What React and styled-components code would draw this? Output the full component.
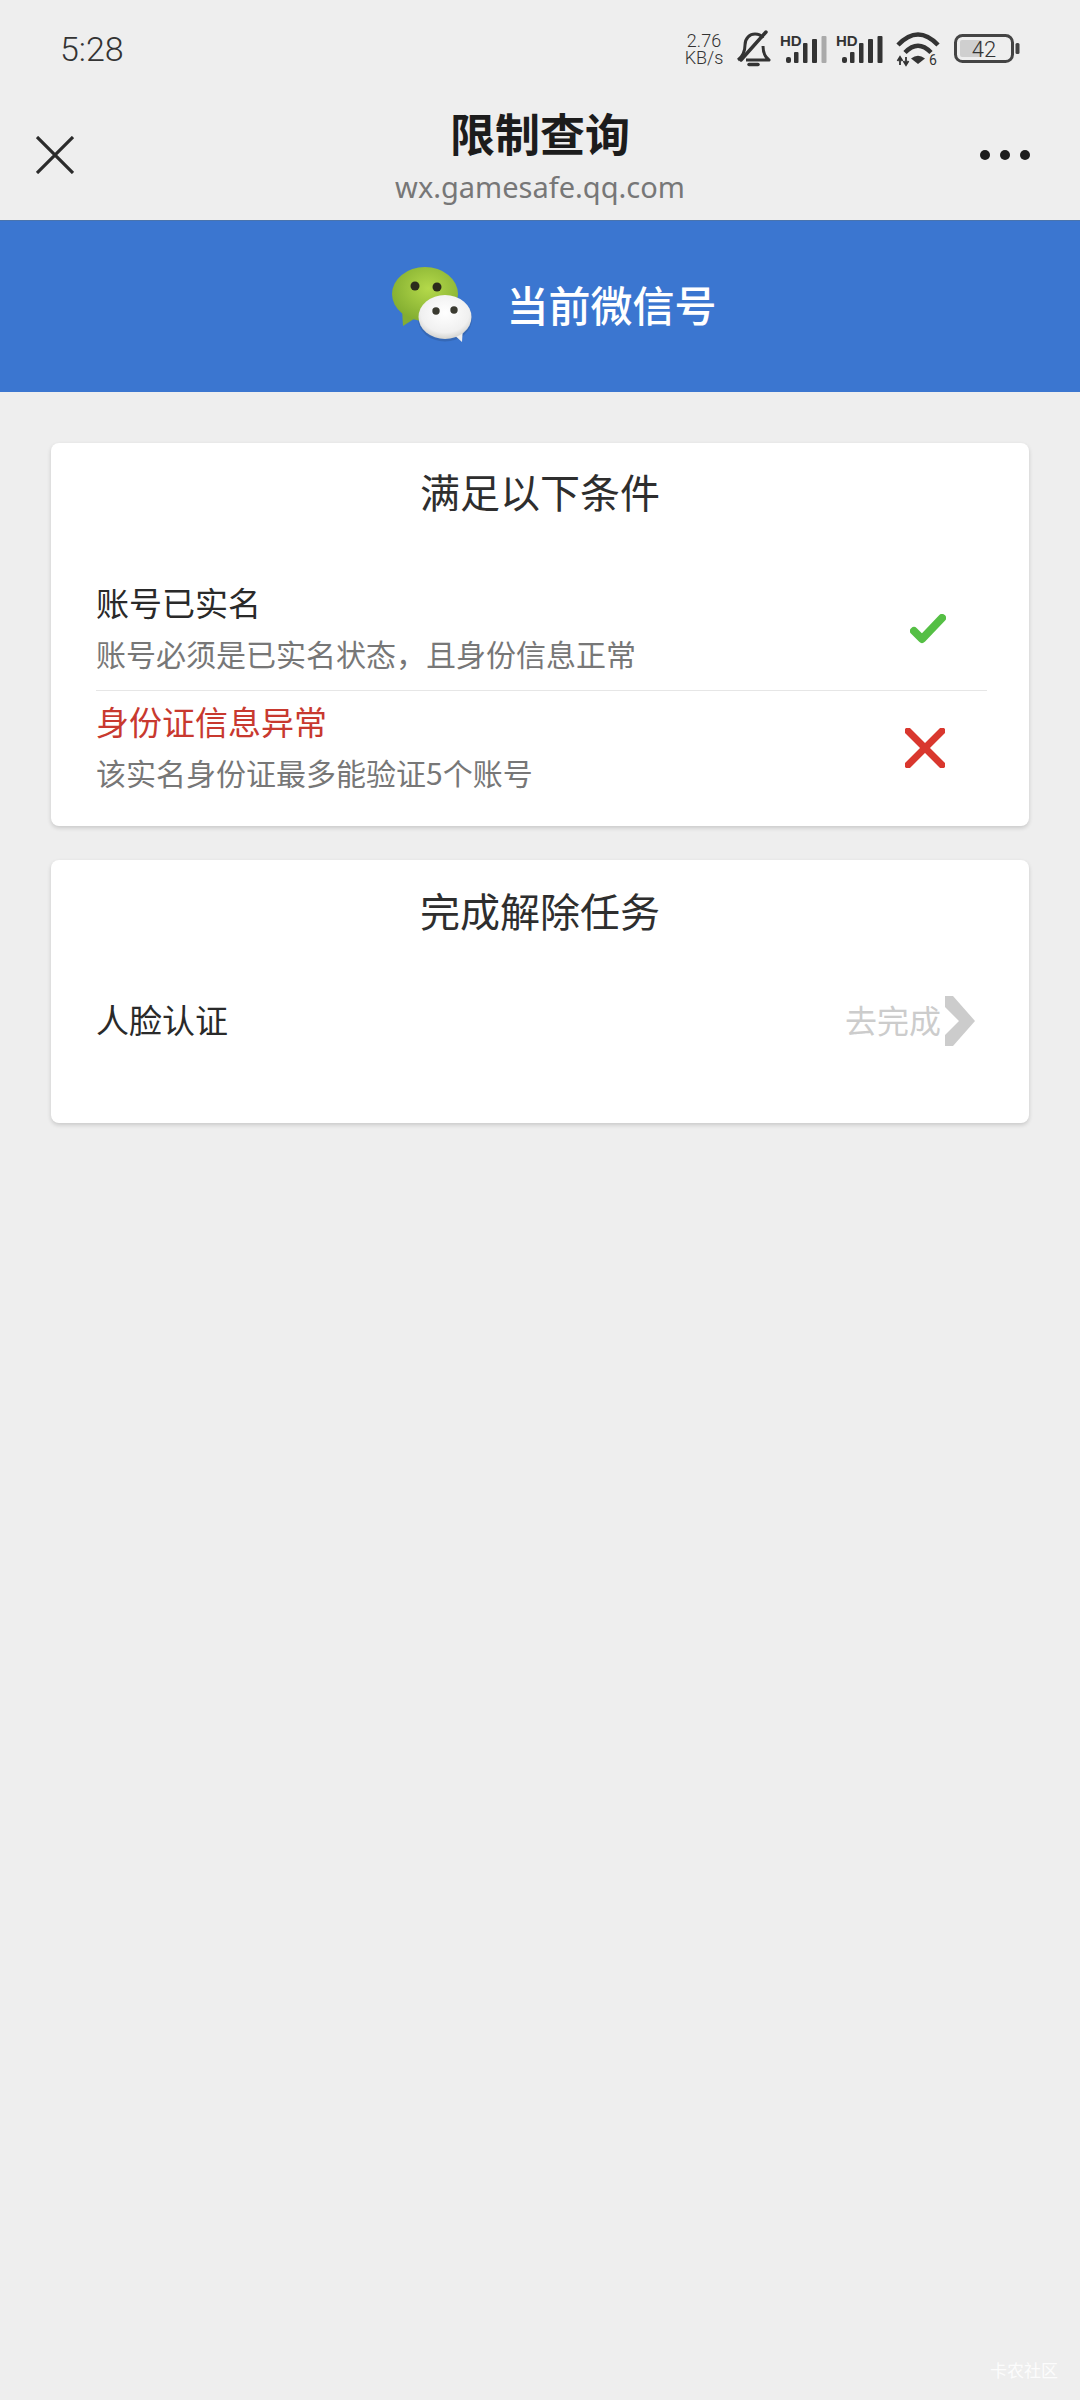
import React from "react";
import styled, { createGlobalStyle } from "styled-components";

const GlobalStyle = createGlobalStyle`
  html, body {
    margin: 0;
    padding: 0;
    background: #eeeeee;
    font-family: "Noto Sans CJK SC", "Noto Sans", sans-serif;
  }
  * {
    box-sizing: border-box;
  }
`;

const Page = styled.div`
  position: relative;
  width: 1080px;
  height: 2400px;
  overflow: hidden;
  background: #eeeeee;
`;

const StatusBar = styled.div`
  display: flex;
  justify-content: space-between;
  align-items: center;
  height: 98px;
  padding: 0 60px;
`;

const Clock = styled.div`
  font-family: Roboto, sans-serif;
  font-size: 34px;
  font-weight: 300;
  color: #333;
`;

const StatusIcons = styled.div`
  display: flex;
  align-items: center;
`;

const Speed = styled.div`
  display: flex;
  flex-direction: column;
  align-items: center;
  width: 42px;
  margin-right: 11px;
  font-family: Roboto, sans-serif;
  font-size: 18px;
  font-weight: 300;
  line-height: 17px;
  color: #333;
`;

const StatusIcon = styled.svg`
  display: block;
  overflow: visible;
  margin-right: ${(props) => props.$gap || 0}px;
`;

const NavBar = styled.div`
  display: grid;
  grid-template-columns: 1fr auto 1fr;
  align-items: center;
  height: 122px;
  padding: 0 36px;
`;

const CloseButton = styled.svg`
  display: block;
  margin-bottom: 8px;
`;

const NavTitle = styled.div`
  display: flex;
  flex-direction: column;
  align-items: center;
`;

const PageName = styled.div`
  height: 56px;
  font-size: 45px;
  font-weight: 700;
  line-height: 48px;
  color: #1c1c1c;
`;

const PageHost = styled.div`
  height: 44px;
  font-family: "Noto Sans", sans-serif;
  font-size: 29px;
  line-height: 44px;
  color: #777;
`;

const MoreButton = styled.div`
  display: flex;
  justify-self: end;
  gap: 10px;
  margin: 0 14px 8px 0;
`;

const MoreDot = styled.span`
  width: 10px;
  height: 10px;
  border-radius: 50%;
  background: #1d1d1d;
`;

const Banner = styled.div`
  display: flex;
  justify-content: center;
  align-items: center;
  gap: 34px;
  height: 172px;
  padding: 0 0 3px 29px;
  background: #3b76d0;
  border-top: 1px solid #4a74ad;
`;

const BannerText = styled.div`
  margin-bottom: 3px;
  font-size: 42px;
  font-weight: 500;
  line-height: 60px;
  color: #fff;
`;

const Content = styled.div`
  display: flex;
  flex-direction: column;
  gap: 34px;
  padding: 51px;
`;

const Card = styled.div`
  padding: 0 42px 14px 45px;
  background: #fff;
  border-radius: 8px;
  box-shadow: 0 2px 4px rgba(0, 0, 0, 0.16);
`;

const CardTitle = styled.div`
  height: ${(props) => props.$height}px;
  padding-right: 3px;
  font-size: 40px;
  line-height: ${(props) => props.$height - 3}px;
  text-align: center;
  color: #2e2e2e;
`;

const Conditions = styled.div`
  margin-top: 26px;
`;

const Condition = styled.div`
  display: flex;
  justify-content: space-between;
  align-items: center;
  padding: ${(props) => (props.$last ? "6px 0 14px" : "9px 0 11px")};
  border-bottom: ${(props) => (props.$last ? "none" : "1px solid #e6e6e6")};
`;

const ConditionText = styled.div`
  display: flex;
  flex-direction: column;
`;

const ConditionName = styled.div`
  height: 50px;
  font-size: 33px;
  line-height: 48px;
  color: ${(props) => (props.$error ? "#c8392f" : "#2a2a2a")};
`;

const ConditionHint = styled.div`
  height: 51px;
  font-size: 30px;
  line-height: 51px;
  color: #777;
`;

const ConditionMark = styled.div`
  display: flex;
  justify-content: center;
  width: 50px;
  margin-right: 35px;
`;

const MarkIcon = styled.svg`
  display: block;
  margin-left: ${(props) => props.$shift}px;
`;

const Task = styled.div`
  display: flex;
  justify-content: space-between;
  align-items: center;
  height: 94px;
  margin: 10px 0 41px;
`;

const TaskName = styled.div`
  margin-bottom: 5px;
  font-size: 33px;
  color: #2a2a2a;
`;

const TaskAction = styled.div`
  display: flex;
  align-items: center;
  gap: 4px;
  margin-right: 12px;
`;

const TaskActionLabel = styled.span`
  margin-bottom: 5px;
  font-size: 32px;
  color: #cccccc;
`;

const Watermark = styled.div`
  position: absolute;
  right: 22px;
  bottom: 20px;
  font-size: 17px;
  line-height: 20px;
  color: rgba(255, 255, 255, 0.85);
`;

// last bar goes grey on the weaker SIM
const SignalIcon = ({ weak, gap }) => (
  <StatusIcon $gap={gap} width="48" height="28" viewBox="0 0 48 28" fill="#333">
    <text x="0" y="11" fontFamily="Liberation Sans, sans-serif" fontSize="15" fontWeight="700">
      HD
    </text>
    <rect x="6" y="22" width="5" height="6" rx="2" />
    <rect x="14" y="17" width="4.5" height="11" rx="1" />
    <rect x="23" y="8" width="4.5" height="20" rx="1" />
    <rect x="32" y="4" width="5" height="24" rx="1" />
    <rect x="41.5" y="1" width="5" height="27" rx="1" fill={weak ? "#aaa" : "#333"} />
  </StatusIcon>
);

const BellOff = () => (
  <StatusIcon $gap={10} width="34" height="36" viewBox="0 0 34 36" fill="none" stroke="#333" strokeWidth="3">
    <path d="M2 29 C7 25 9 19 9 14 C9 7 14 3 19 3 C22 3 25 4 27 7" />
    <path d="M27 15 C27 21 29 26 33 29 H10" strokeLinejoin="round" />
    <path d="M30 1 L5 29" strokeWidth="3.5" strokeLinecap="round" />
    <path d="M13 33.5 H22" strokeWidth="3.5" strokeLinecap="round" />
  </StatusIcon>
);

const Wifi = () => (
  <StatusIcon $gap={14} width="44" height="34" viewBox="0 0 44 34" fill="none" stroke="#333">
    <path d="M2 13 Q22 -8 42 13" strokeWidth="4.5" />
    <path d="M9 20.5 Q22 7 35 20.5" strokeWidth="4.5" />
    <path d="M15 26.5 Q22 21 29 26.5 L22 32 Z" fill="#333" stroke="none" />
    <path d="M4 25 V33 M1.5 29 L4 25 L6.5 29 M10 33 V25 M7.5 29 L10 33 L12.5 29" strokeWidth="1.8" />
    <text x="33" y="33" stroke="none" fill="#333" fontFamily="Roboto, sans-serif" fontSize="14">
      6
    </text>
  </StatusIcon>
);

const Battery = () => (
  <StatusIcon width="66" height="30" viewBox="0 0 66 30" fill="none">
    <rect x="1.5" y="1.5" width="57" height="26" rx="7" stroke="#444" strokeWidth="3" />
    <rect x="6" y="6" width="22" height="17" rx="2" fill="#cfcfcf" />
    <rect x="61.5" y="9" width="4" height="11" rx="1.5" fill="#444" />
    <text x="30" y="23" textAnchor="middle" fill="#333" fontFamily="Roboto, sans-serif" fontWeight="300" fontSize="22">
      42
    </text>
  </StatusIcon>
);

const WeChatLogo = () => (
  <svg width="80" height="76" viewBox="0 0 80 76">
    <defs>
      <radialGradient id="greenBubble" cx="55%" cy="40%" r="65%">
        <stop offset="0%" stopColor="#b4d94a" />
        <stop offset="100%" stopColor="#80ab2f" />
      </radialGradient>
      <radialGradient id="whiteBubble" cx="50%" cy="40%" r="65%">
        <stop offset="0%" stopColor="#ffffff" />
        <stop offset="70%" stopColor="#f0f0f0" />
        <stop offset="100%" stopColor="#c9c9c4" />
      </radialGradient>
    </defs>
    <ellipse cx="53" cy="52" rx="27" ry="22.5" fill="#2a4f86" opacity="0.35" />
    <path d="M10 42 L11 59 L25 50 Z" fill="#83ad33" />
    <ellipse cx="33" cy="27" rx="33" ry="27" fill="url(#greenBubble)" />
    <circle cx="23" cy="19" r="4.5" fill="#2c2c1c" />
    <circle cx="45" cy="20" r="4.5" fill="#2c2c1c" />
    <path d="M60 66 L70 75 L71 60 Z" fill="#eeeeee" />
    <ellipse cx="53" cy="50" rx="26.5" ry="22" fill="url(#whiteBubble)" />
    <circle cx="44" cy="44" r="3.7" fill="#3a3a30" />
    <circle cx="62" cy="43" r="3.7" fill="#3a3a30" />
  </svg>
);

const conditions = [
  { name: "账号已实名", hint: "账号必须是已实名状态，且身份信息正常", ok: true },
  { name: "身份证信息异常", hint: "该实名身份证最多能验证5个账号", ok: false },
];

const App = () => (
  <Page>
    <GlobalStyle />
    <StatusBar>
      <Clock>5:28</Clock>
      <StatusIcons>
        <Speed>
          <span>2.76</span>
          <span>KB/s</span>
        </Speed>
        <BellOff />
        <SignalIcon weak gap={8} />
        <SignalIcon gap={12} />
        <Wifi />
        <Battery />
      </StatusIcons>
    </StatusBar>

    <NavBar>
      <CloseButton width="38" height="38" viewBox="0 0 38 38" stroke="#2b2b2b" strokeWidth="3.2">
        <path d="M1 1 L37 37 M37 1 L1 37" />
      </CloseButton>
      <NavTitle>
        <PageName>限制查询</PageName>
        <PageHost>wx.gamesafe.qq.com</PageHost>
      </NavTitle>
      <MoreButton>
        <MoreDot />
        <MoreDot />
        <MoreDot />
      </MoreButton>
    </NavBar>

    <Banner>
      <WeChatLogo />
      <BannerText>当前微信号</BannerText>
    </Banner>

    <Content>
      <Card>
        <CardTitle $height={100}>满足以下条件</CardTitle>
        <Conditions>
          {conditions.map((item, i) => (
            <Condition key={item.name} $last={i === conditions.length - 1}>
              <ConditionText>
                <ConditionName $error={!item.ok}>{item.name}</ConditionName>
                <ConditionHint>{item.hint}</ConditionHint>
              </ConditionText>
              <ConditionMark>
                {item.ok ? (
                  <MarkIcon $shift={2} width="36" height="30" viewBox="0 0 36 30" fill="none" stroke="#55bf45" strokeWidth="8" strokeLinecap="round" strokeLinejoin="round">
                    <path d="M4 17 L12 25 L32 4" />
                  </MarkIcon>
                ) : (
                  <MarkIcon $shift={-4} width="40" height="40" viewBox="0 0 40 40" fill="none" stroke="#d9372e" strokeWidth="7" strokeLinecap="round">
                    <path d="M3 3 L37 37 M37 3 L3 37" />
                  </MarkIcon>
                )}
              </ConditionMark>
            </Condition>
          ))}
        </Conditions>
      </Card>

      <Card>
        <CardTitle $height={104}>完成解除任务</CardTitle>
        <Task>
          <TaskName>人脸认证</TaskName>
          <TaskAction>
            <TaskActionLabel>去完成</TaskActionLabel>
            <svg width="30" height="50" viewBox="0 0 30 50" fill="#cccccc">
              <path d="M0 0 L8 0 L30 25 L8 50 L0 50 L0 39 L14 25 L0 11 Z" />
            </svg>
          </TaskAction>
        </Task>
      </Card>
    </Content>

    <Watermark>卡农社区</Watermark>
  </Page>
);

export default App;
